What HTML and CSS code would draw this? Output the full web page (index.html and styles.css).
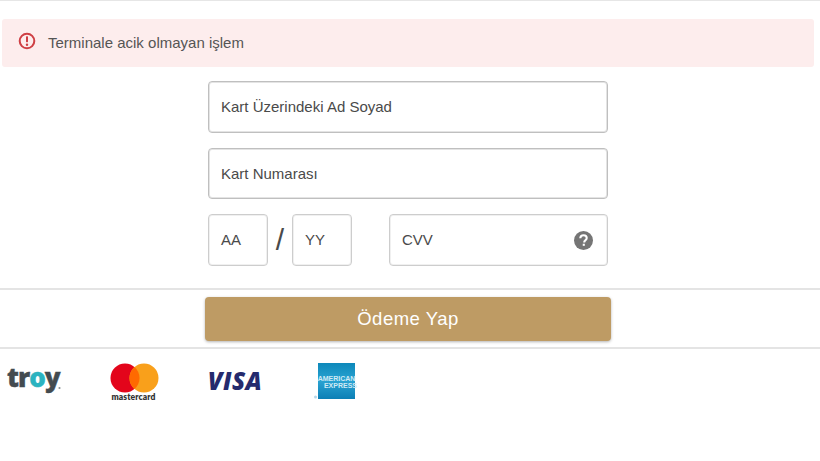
FILE: index.html
```html
<!DOCTYPE html>
<html lang="tr">
<head>
<meta charset="utf-8">
<title>Ödeme</title>
<link rel="stylesheet" href="styles.css">
</head>
<body>
<div class="page">
  <div class="alert">
    <svg class="alert-icon" viewBox="0 0 18 18" width="18" height="18" aria-hidden="true">
      <circle cx="9" cy="9" r="7.300" fill="none" stroke="#cf3f44" stroke-width="2"/>
      <rect x="8" y="4.200" width="2" height="6" rx=".6" fill="#cf3f44"/>
      <circle cx="9" cy="12.700" r="1.200" fill="#cf3f44"/>
    </svg>
    <span>Terminale acik olmayan işlem</span>
  </div>
  <form class="form">
    <div class="field strong"><span class="lift">Kart Üzerindeki Ad Soyad</span></div>
    <div class="field strong">Kart Numarası</div>
    <div class="row">
      <div class="field small"><span class="lift">AA</span></div>
      <div class="slash">/</div>
      <div class="field small"><span class="lift">YY</span></div>
      <div class="field cvv">
        <span class="lift">CVV</span>
        <svg viewBox="0 0 20 20" width="19" height="19" aria-hidden="true">
          <circle cx="10" cy="10" r="10" fill="#757575"/>
          <path d="M6.600 7.600c.1-2 1.500-3.200 3.500-3.200 1.900 0 3.300 1.200 3.300 2.900 0 1.200-.6 1.900-1.500 2.500-.8.6-1.100 1-1.100 1.900v.4" fill="none" stroke="#fff" stroke-width="2.200"/>
          <rect x="9.200" y="13.400" width="2.200" height="2.200" fill="#fff"/>
        </svg>
      </div>
    </div>
  </form>
  <div class="divider first"></div>
  <div class="action"><button type="button" class="pay">Ödeme Yap</button></div>
  <div class="divider second"></div>
  <div class="logos">
    <svg class="logo troy" viewBox="0 0 56 28" width="56" height="28" role="img">
      <text x="0" y="20" class="troy-text">tr<tspan fill="#2bb3c0" stroke="#2bb3c0">o</tspan>y</text>
      <circle cx="52.500" cy="21" r="1.100" fill="#8a9296"/>
    </svg>
    <svg class="logo mc" viewBox="0 0 50 40" width="50" height="40" role="img">
      <circle cx="15" cy="15" r="14.500" fill="#e3051b"/>
      <circle cx="34" cy="15" r="14.500" fill="#f9a01b"/>
      <path d="M24.500 4a14.500 14.500 0 0 1 0 22 14.500 14.500 0 0 1 0-22z" fill="#ff6a00"/>
      <text x="23.500" y="36.500" class="mc-text">mastercard</text>
    </svg>
    <svg class="logo visa" viewBox="0 0 56 24" width="56" height="24" role="img">
      <text x="28" y="20" class="visa-text">VISA</text>
    </svg>
    <svg class="logo amex" viewBox="0 0 44 38" width="44" height="38" role="img">
      <defs>
        <linearGradient id="amexfill" x1="0" y1="0" x2="0" y2="1">
          <stop offset="0" stop-color="#0d88ba"/>
          <stop offset=".5" stop-color="#2aa3d2"/>
          <stop offset="1" stop-color="#0c7fb5"/>
        </linearGradient>
      </defs>
      <rect x="4" y="0" width="37" height="36" fill="url(#amexfill)"/>
      <text x="22.500" y="18" class="amex-text">AMERICAN</text>
      <text x="26.500" y="25" class="amex-text">EXPRESS</text>
      <circle cx="1.500" cy="34" r="1.500" fill="#b5d7ea"/>
    </svg>
  </div>
</div>
</body>
</html>
```

FILE: styles.css
```css
* { box-sizing: border-box; }
html, body { margin: 0; padding: 0; background: #fff; }
body { width: 820px; height: 461px; overflow: hidden; font-family: "Liberation Sans", Arial, sans-serif; color: #4f4f4f; }
.page { border-top: 1px solid #e6e6e6; height: 100%; padding-top: 18px; }

.alert { margin: 0 6px 0 2px; height: 48px; background: #fdeded; border-radius: 3px; display: flex; align-items: center; gap: 12px; padding: 0 0 2px 16px; font-size: 15px; color: #555; }
.alert-icon { margin-bottom: 2px; }

.form { width: 400px; margin: 14px 0 0 208px; display: flex; flex-direction: column; gap: 15px; }
.field { height: 52px; border: 1px solid #cdcdcd; box-shadow: inset 0 0 0 1px #f0f0f0; border-radius: 4px; display: flex; align-items: center; padding-left: 12px; font-size: 15px; color: #4a4a4a; background: #fff; }
.strong { border-color: #bfbfbf; box-shadow: inset 0 0 0 1px #e4e4e4; }
.form > .field:nth-child(2) { height: 51px; }
.lift { position: relative; top: -1px; }
.row { display: flex; align-items: stretch; }
.small { width: 60px; }
.slash { width: 24px; text-align: center; font-size: 30px; line-height: 52px; color: #4a4a4a; }
.cvv { width: 219px; margin-left: 37px; justify-content: space-between; padding-right: 14px; }

.divider { height: 2px; background: #e4e4e4; }
.first { margin-top: 22px; }
.action { padding: 7px 0 0 205px; }
.pay { display: block; width: 406px; height: 44px; border: 0; border-radius: 4px; background: #be9b64; color: #fff; font: 18.500px "Liberation Sans", Arial, sans-serif; letter-spacing: .5px; box-shadow: 0 1px 3px rgba(0,0,0,.3); padding: 0; }
.second { margin-top: 6px; }

.logos { height: 60px; display: flex; align-items: flex-start; padding-left: 7px; padding-top: 14px; }
.logo { display: block; flex: none; overflow: visible; }
.troy { margin-top: 4px; }
.mc { margin-left: 47px; }
.visa { margin-left: 47px; margin-top: 7px; }
.amex { margin-left: 51px; }
.troy-text { font: 800 26px "Open Sans", "Liberation Sans", sans-serif; fill: #434b50; letter-spacing: -1px; stroke: #434b50; stroke-width: .4px; }
.mc-text { font: 800 8.500px "Lato", "Liberation Sans", sans-serif; fill: #333; text-anchor: middle; letter-spacing: .1px; }
.visa-text { font: italic 800 24px "Open Sans", "Liberation Sans", sans-serif; fill: #252a6d; text-anchor: middle; letter-spacing: .4px; }
.amex-text { font: 700 7px "Liberation Sans", sans-serif; fill: #cfeaf5; text-anchor: middle; }
```
